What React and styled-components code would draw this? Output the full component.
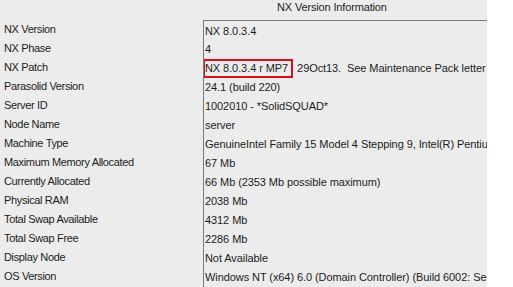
import React from 'react';
import styled, { createGlobalStyle } from 'styled-components';

const GlobalStyle = createGlobalStyle`
  html, body {
    margin: 0;
    padding: 0;
    background: #ffffff;
  }
`;

const Panel = styled.div`
  width: 487px;
  height: 287px;
  overflow: hidden;
  background: #ececec;
  font-family: Tahoma, "Liberation Sans", Arial, sans-serif;
  font-size: 11px;
  color: #1c1c1c;
`;

const Title = styled.div`
  height: 20px;
  line-height: 15px;
  padding-left: 277px;
  letter-spacing: -0.15px;
  white-space: nowrap;
`;

const Body = styled.div`
  display: grid;
  grid-template-columns: 203px 1fr;
`;

const Labels = styled.div`
  display: flex;
  flex-direction: column;
`;

const Values = styled.div`
  display: flex;
  flex-direction: column;
  border-top: 1px solid #7a7a7a;
  border-left: 1px solid #7a7a7a;
  padding-left: 1px;
  overflow: hidden;
`;

const Label = styled.div`
  height: 19px;
  line-height: 19px;
  padding-left: 4px;
  letter-spacing: -0.35px;
  white-space: nowrap;
`;

const Value = styled.div`
  height: 19px;
  line-height: ${({ $first }) => ($first ? '18px' : '19px')};
  letter-spacing: -0.08px;
  white-space: nowrap;
  display: flex;
  align-items: center;
`;

const Highlight = styled.span`
  display: inline-block;
  height: 19px;
  line-height: 15px;
  box-sizing: border-box;
  border: 2px solid #d3121a;
  padding: 0 3px 0 0;
  margin-left: -2px;
  margin-right: 4px;
`;

const rows = [
  ['NX Version', 'NX 8.0.3.4'],
  ['NX Phase', '4'],
  ['NX Patch', null],
  ['Parasolid Version', '24.1 (build 220)'],
  ['Server ID', '1002010 - *SolidSQUAD*'],
  ['Node Name', 'server'],
  ['Machine Type', 'GenuineIntel Family 15 Model 4 Stepping 9, Intel(R) Pentium'],
  ['Maximum Memory Allocated', '67 Mb'],
  ['Currently Allocated', '66 Mb (2353 Mb possible maximum)'],
  ['Physical RAM', '2038 Mb'],
  ['Total Swap Available', '4312 Mb'],
  ['Total Swap Free', '2286 Mb'],
  ['Display Node', 'Not Available'],
  ['OS Version', 'Windows NT (x64) 6.0 (Domain Controller) (Build 6002: Ser'],
];

export default function App() {
  return (
    <>
      <GlobalStyle />
      <Panel>
        <Title>NX Version Information</Title>
        <Body>
          <Labels>
            {rows.map(([label]) => (
              <Label key={label}>{label}</Label>
            ))}
          </Labels>
          <Values>
            {rows.map(([label, value], i) => (
              <Value key={label} $first={i === 0}>
                {value === null ? (
                  <>
                    <Highlight>NX 8.0.3.4 r MP7</Highlight>
                    29Oct13.&nbsp; See Maintenance Pack letter f
                  </>
                ) : (
                  value
                )}
              </Value>
            ))}
          </Values>
        </Body>
      </Panel>
    </>
  );
}
